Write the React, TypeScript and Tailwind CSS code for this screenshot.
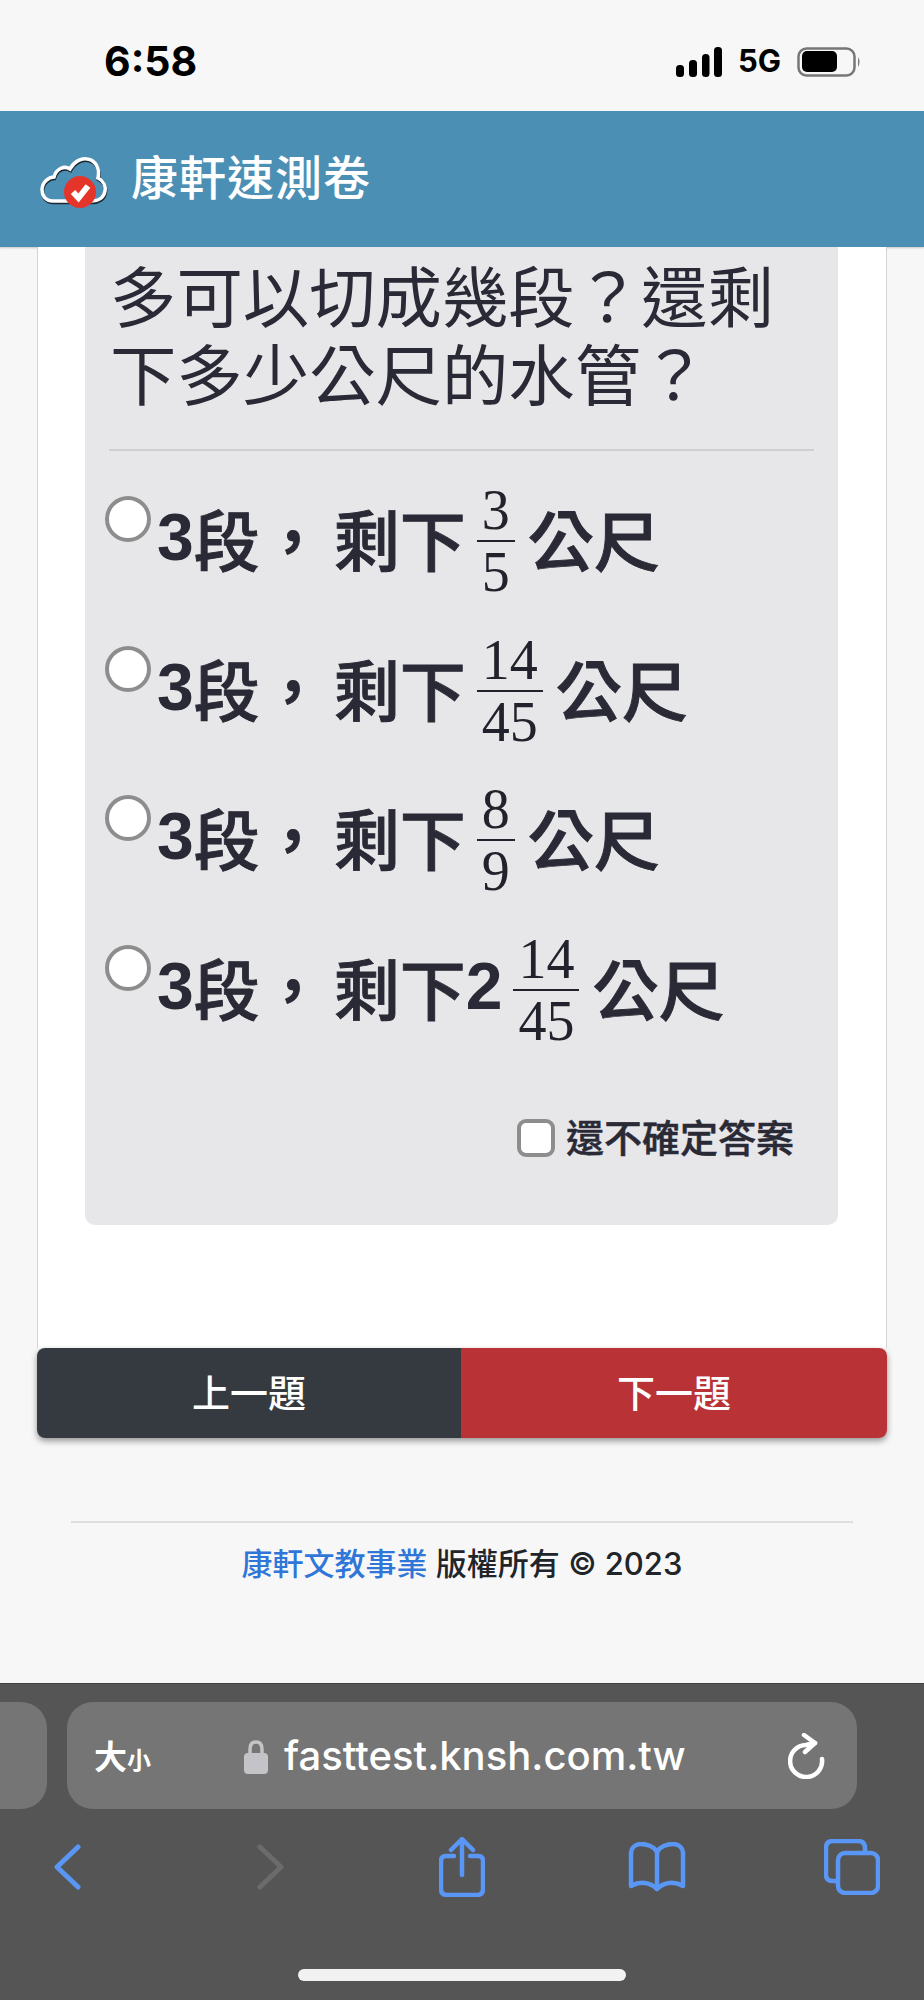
import React from 'react';

const options = [
  { whole: '', top: '3', bottom: '5' },
  { whole: '', top: '14', bottom: '45' },
  { whole: '', top: '8', bottom: '9' },
  { whole: '2', top: '14', bottom: '45' },
];

const Fraction = ({ top, bottom }: { top: string; bottom: string }) => (
  <span className="ml-[11px] mr-[13px] mt-[4px] inline-flex flex-col items-stretch text-center font-['Liberation_Serif',serif] text-[56px] font-normal leading-[54px] text-[#22222c] [-webkit-text-stroke:0px]">
    <span className="h-[60px] px-[5px] pt-[3px]">{top}</span>
    <span className="h-[2px] bg-[#22222c]" />
    <span className="h-[56px] px-[5px] pt-[3px]">{bottom}</span>
  </span>
);

const Option = ({ whole, top, bottom }: { whole: string; top: string; bottom: string }) => (
  <div className="flex h-[149.5px] items-start">
    <span className="mt-[16px] h-[46px] w-[46px] shrink-0 rounded-full border-[4px] border-[#8d8d8d] bg-white" />
    <div className="ml-[6px] flex h-[114px] items-center text-[66px] font-medium leading-none text-[#2a2a36] [-webkit-text-stroke:0.9px_#2a2a36]">
      <span className="font-['Liberation_Sans','Noto_Sans_CJK_TC',sans-serif] font-bold [-webkit-text-stroke:0px]">3</span>
      <span className="font-['Noto_Sans_CJK_TC',sans-serif]">段</span>
      <span className="mr-[8px] font-['Noto_Sans_CJK_TC',sans-serif]">，</span>
      <span className="font-['Noto_Sans_CJK_TC',sans-serif]">剩下</span>
      {whole && <span className="font-['Liberation_Sans',sans-serif] font-bold [-webkit-text-stroke:0px]">{whole}</span>}
      <Fraction top={top} bottom={bottom} />
      <span className="font-['Noto_Sans_CJK_TC',sans-serif]">公尺</span>
    </div>
  </div>
);

const cloud =
  'M13 46 C5 46 2 40 2 35 C2 27 9 22 14 22 C16 14 24 10 30 14 C34 6 42 3 47 4 C56 5 60 14 58 23 C64 26 66 32 65 36 C64 43 58 46 52 46 Z';

const Logo = () => (
  <svg width="70" height="54" viewBox="0 0 70 54" className="mt-[5px] shrink-0">
    <path d={cloud} fill="none" stroke="#1c2730" strokeWidth="3.5" transform="translate(0.5 1.5)" />
    <path d={cloud} fill="none" stroke="#ffffff" strokeWidth="3.5" />
    <circle cx="40" cy="37" r="16" fill="#e5352a" />
    <path d="M33 37 L38.5 43 L48 31" fill="none" stroke="#ffffff" strokeWidth="6" />
  </svg>
);

const StatusBar = () => (
  <div className="flex h-[111px] shrink-0 items-start justify-between bg-[#f7f7f7] pl-[104px] pr-[62px] pt-[38px]">
    <span className="font-['Inter',sans-serif] text-[41px] font-bold leading-[46px] text-black">6:58</span>
    <div className="flex items-start">
      <svg width="46" height="30" viewBox="0 0 46 30" className="mt-[9px]">
        <rect x="0" y="18" width="8" height="12" rx="3.5" fill="#000" />
        <rect x="13" y="13" width="8" height="17" rx="3.5" fill="#000" />
        <rect x="26" y="7" width="7.5" height="23" rx="3.5" fill="#000" />
        <rect x="38" y="0" width="8" height="30" rx="3.5" fill="#000" />
      </svg>
      <span className="ml-[16px] font-['Inter',sans-serif] text-[31px] font-bold leading-[46px] text-black">5G</span>
      <svg width="65" height="30" viewBox="0 0 65 30" className="ml-[16px] mt-[9px]">
        <rect x="1.5" y="1.5" width="56" height="27" rx="8" fill="none" stroke="#77777a" strokeWidth="2.5" />
        <rect x="5" y="4" width="35" height="21" rx="5" fill="#000" />
        <path d="M61 10 Q64 15 61 20 Z" fill="#77777a" />
      </svg>
    </div>
  </div>
);

const Toolbar = () => (
  <div className="ml-[-30px] mt-[28px] flex items-center text-[#5a96f5]">
    <div className="flex w-[195px] shrink-0 justify-center">
      <svg width="27" height="46" viewBox="0 0 27 46" fill="none" stroke="currentColor" strokeWidth="5" strokeLinecap="round" strokeLinejoin="round">
        <path d="M24 3 L3 23 L24 43" />
      </svg>
    </div>
    <div className="flex w-[210px] shrink-0 justify-center text-[#6b6b6b]">
      <svg width="27" height="46" viewBox="0 0 27 46" fill="none" stroke="currentColor" strokeWidth="5" strokeLinecap="round" strokeLinejoin="round">
        <path d="M3 3 L24 23 L3 43" />
      </svg>
    </div>
    <div className="flex w-[173px] shrink-0 justify-center">
      <svg width="46" height="60" viewBox="0 0 46 60" fill="none" stroke="currentColor" strokeWidth="4.5" strokeLinecap="round" strokeLinejoin="round">
        <path d="M15 19 H7 Q2 19 2 24 V52 Q2 58 8 58 H38 Q44 58 44 52 V24 Q44 19 39 19 H31" />
        <path d="M23 38 V3 M12 13 L23 2 L34 13" />
      </svg>
    </div>
    <div className="flex w-[218px] shrink-0 justify-center">
      <svg width="58" height="50" viewBox="0 0 58 50" fill="none" stroke="currentColor" strokeWidth="4.5" strokeLinejoin="round" strokeLinecap="round">
        <path d="M29 10 C26 4 18 2 13 2 C7 2 3 6 3 12 V44 C12 39 22 40 29 47 C36 40 46 39 55 44 V12 C55 6 51 2 45 2 C40 2 32 4 29 10 Z" />
        <path d="M29 10 V47" />
      </svg>
    </div>
    <div className="flex w-[172px] shrink-0 justify-center">
      <svg width="56" height="56" viewBox="0 0 56 56" fill="none" stroke="currentColor" strokeWidth="4.5" strokeLinejoin="round">
        <path d="M12 42 H9 Q2 42 2 36 V9 Q2 2 9 2 H34 Q41 2 41 9 V13" />
        <rect x="14" y="14" width="40" height="40" rx="7" />
      </svg>
    </div>
  </div>
);

const BrowserBar = () => (
  <div className="relative mt-auto h-[317px] overflow-hidden border-t border-[#3f3f3f] bg-[#555555]">
    <div className="mt-[18px] flex h-[107px] gap-[20px]">
      <div className="ml-[-60px] w-[107px] rounded-[26px] bg-[#757575]" />
      <div className="flex w-[790px] items-center rounded-[26px] bg-[#757575] pl-[27px] text-white">
        <span className="flex w-[150px] items-baseline font-['Noto_Sans_CJK_TC',sans-serif] font-bold">
          <span className="text-[33px]">大</span>
          <span className="text-[24px]">小</span>
        </span>
        <svg width="24" height="36" viewBox="0 0 24 36" className="mt-[2px] shrink-0">
          <path d="M6 16 V10 Q6 3 12 3 Q18 3 18 10 V16" fill="none" stroke="#c3c3c8" strokeWidth="3.5" />
          <rect x="0" y="14" width="24" height="21" rx="4" fill="#c3c3c8" />
        </svg>
        <span className="ml-[16px] font-['Inter',sans-serif] text-[40px] font-medium leading-none">fasttest.knsh.com.tw</span>
        <svg width="38" height="46" viewBox="0 0 38 46" fill="none" stroke="#ffffff" strokeWidth="4.5" strokeLinecap="round" strokeLinejoin="round" className="ml-[102px]">
          <path d="M27 10 Q22 11 18 12 A16 16 0 1 0 34 26" />
          <path d="M16 2 L27 10 L17 19" />
        </svg>
      </div>
    </div>
    <Toolbar />
    <div className="absolute bottom-[19px] left-[298px] h-[12px] w-[328px] rounded-full bg-[#f2f2f2]" />
  </div>
);

export default function App() {
  return (
    <div className="flex h-[2000px] w-[924px] flex-col overflow-hidden bg-[#f7f7f7] font-['Inter','Noto_Sans_CJK_TC',sans-serif]">
      <StatusBar />
      <header className="flex h-[136px] shrink-0 items-center bg-[#4c8fb4] pl-[40px] shadow-[0_1px_2px_rgba(0,0,0,0.2)]">
        <Logo />
        <span className="mb-[9px] ml-[21px] font-['Noto_Sans_CJK_TC',sans-serif] text-[47px] font-medium leading-none tracking-[1px] text-white">康軒速測卷</span>
      </header>

      <main className="mx-[37px] h-[1101px] w-[850px] shrink-0 border-x border-[#d5d5d5] bg-white pl-[47px]">
        <div className="h-[978px] w-[753px] rounded-b-[10px] bg-[#e7e7ea] pt-[7px]">
          <p className="pl-[25px] font-['Noto_Sans_CJK_TC',sans-serif] text-[66.4px] font-normal leading-[78px] text-[#2a2a36]">
            多可以切成幾段？還剩
            <br />
            下多少公尺的水管？
          </p>
          <hr className="ml-[24px] mt-[39px] w-[705px] border-t-2 border-[#cfcfd0]" />
          <div className="ml-[20px] mt-[29px]">
            {options.map((o, i) => (
              <Option key={i} whole={o.whole} top={o.top} bottom={o.bottom} />
            ))}
          </div>
          <label className="mr-[44px] mt-[39px] flex items-center justify-end">
            <span className="h-[38px] w-[38px] rounded-[9px] border-[4px] border-[#8d8d8d] bg-white" />
            <span className="mb-[3px] ml-[11px] font-['Noto_Sans_CJK_TC',sans-serif] text-[38px] font-medium leading-none text-[#2a2a36] [-webkit-text-stroke:0.5px_#2a2a36]">還不確定答案</span>
          </label>
        </div>
      </main>

      <div className="mx-[37px] flex h-[90px] w-[850px] shrink-0 overflow-hidden rounded-[8px] shadow-[0_3px_6px_rgba(0,0,0,0.4)]">
        <button className="w-[424px] bg-[#343a40] pb-[6px] font-['Noto_Sans_CJK_TC',sans-serif] text-[38px] font-medium text-white">上一題</button>
        <button className="flex-1 bg-[#b83236] pb-[6px] font-['Noto_Sans_CJK_TC',sans-serif] text-[38px] font-medium text-white">下一題</button>
      </div>

      <footer className="mx-[71px] mt-[83px] border-t-2 border-[#dedede] pt-[21px] text-center font-['Inter','Noto_Sans_CJK_TC',sans-serif] text-[31px] font-medium leading-[40px] text-[#212529]">
        <span className="text-[#2f76d8]">康軒文教事業</span> 版權所有 © 2023
      </footer>

      <BrowserBar />
    </div>
  );
}
